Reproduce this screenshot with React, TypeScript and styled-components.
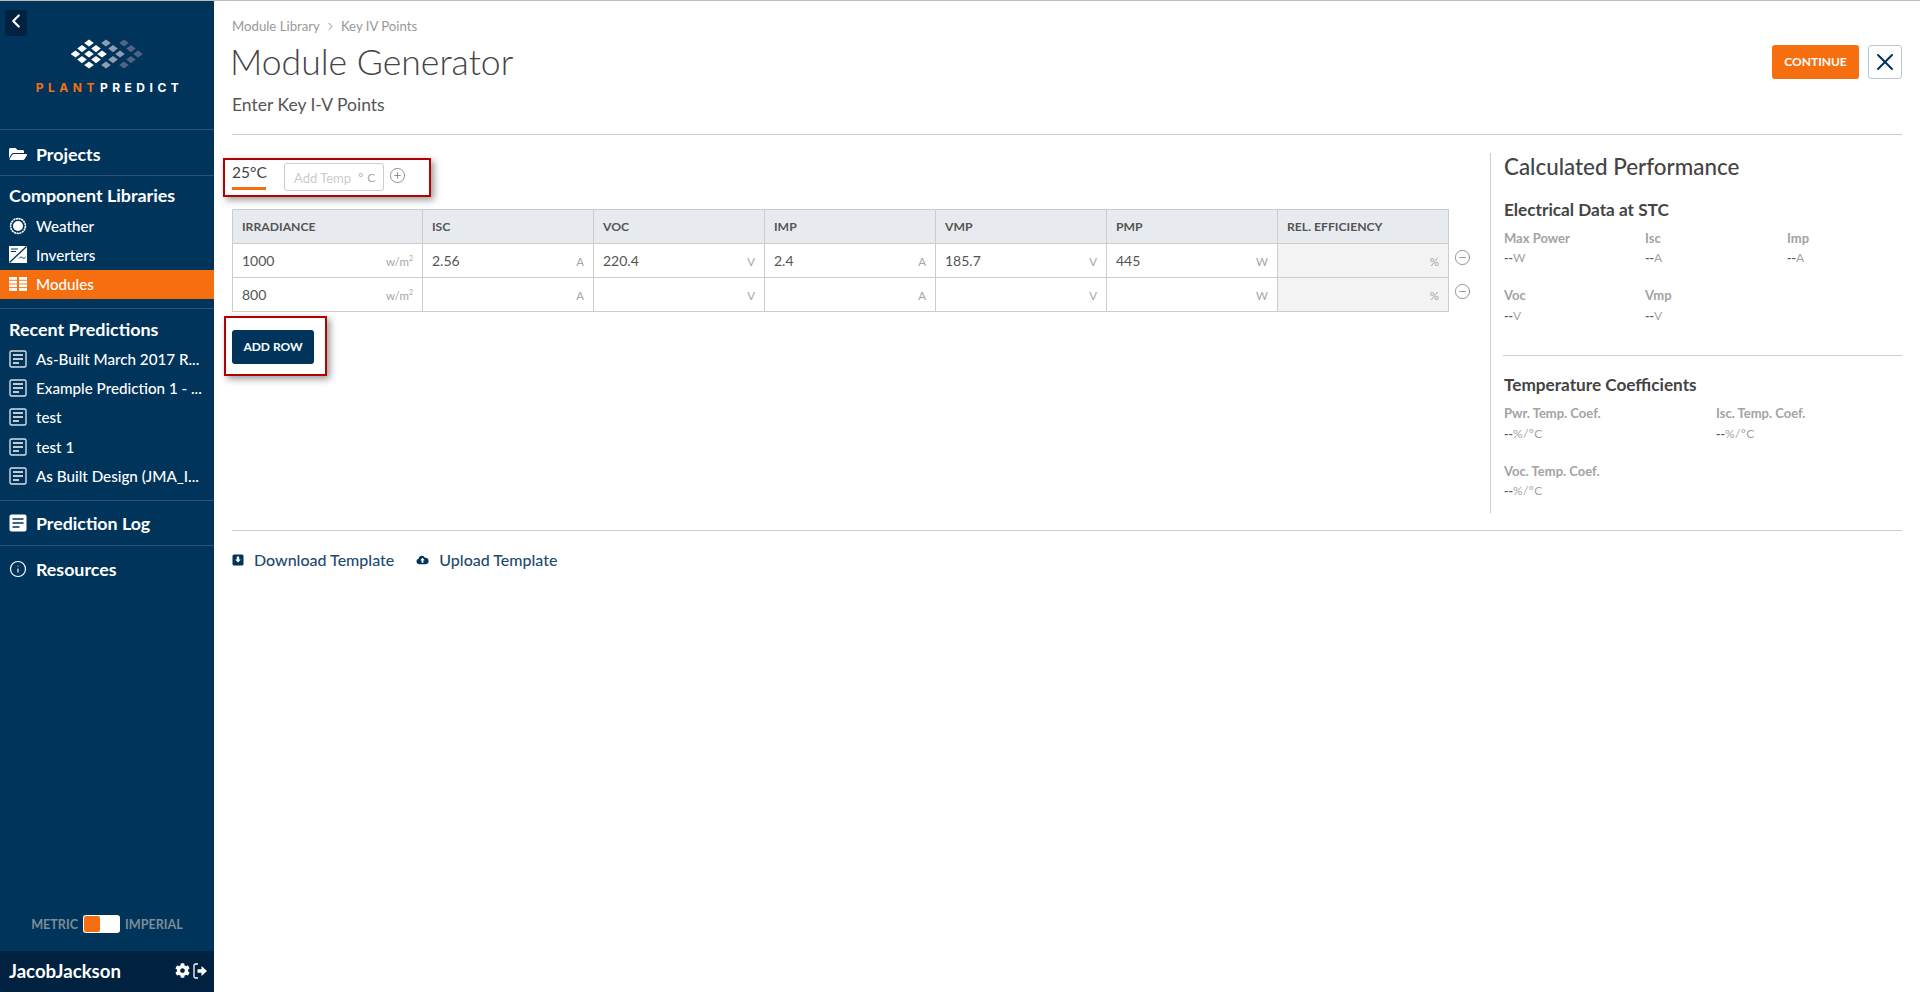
import React from "react";
import styled, { createGlobalStyle } from "styled-components";
import { ChevronLeft, ChevronRight, CircleMinus, CirclePlus, Info, X } from "lucide-react";
import { FaCog, FaFolderOpen } from "react-icons/fa";

const Global = createGlobalStyle`
  html, body { margin: 0; padding: 0; height: 100%; background: #fff; }
  body { font-family: "Lato", "Open Sans", sans-serif; color: #444; }
  #root { height: 992px; }
  * { box-sizing: border-box; }
`;

const NAVY = "#00345b";
const ORANGE = "#f56f10";

const Page = styled.div`
  display: flex;
  height: 992px;
  border-top: 1px solid #bdbdbd;
  overflow: hidden;
`;

const Sidebar = styled.aside`
  width: 214px;
  flex: none;
  background: ${NAVY};
  color: #fff;
  display: flex;
  flex-direction: column;
  position: relative;
`;

const BackButton = styled.button`
  position: absolute;
  left: 5px;
  top: 9px;
  width: 22px;
  height: 26px;
  border: 0;
  padding: 0 0 4px;
  border-radius: 3px;
  background: #00213f;
  color: #fff;
  display: flex;
  align-items: center;
  justify-content: center;
`;

const LogoArea = styled.div`
  height: 129px;
  padding-top: 37px;
  display: flex;
  flex-direction: column;
  align-items: center;
  border-bottom: 1px solid #2b5376;
`;

const LogoWord = styled.div`
  margin-top: 11px;
  margin-left: 5px;
  font-size: 12px;
  font-weight: 700;
  letter-spacing: 4.5px;
  line-height: 14px;
  white-space: nowrap;
  font-family: "Inter", sans-serif;
`;

const LogoOrange = styled.span`
  color: ${ORANGE};
  margin-right: 1px;
`;

const NavSection = styled.div<{ $h: number; $line?: boolean }>`
  height: ${(p) => p.$h}px;
  display: flex;
  flex-direction: column;
  border-bottom: ${(p) => (p.$line ? "1px solid #2b5376" : "0")};
`;

const TopLink = styled.div<{ $pad?: number }>`
  flex: 1;
  display: flex;
  align-items: center;
  gap: 9px;
  padding: ${(p) => p.$pad ?? 0}px 0 0 9px;
  font-size: 17.8px;
  font-weight: 700;
`;

const SectionTitle = styled.div<{ $top: number; $bottom: number }>`
  height: 29px;
  flex: none;
  margin: ${(p) => p.$top}px 0 ${(p) => p.$bottom}px;
  padding: 0 0 0 9px;
  display: flex;
  align-items: center;
  font-size: 17.9px;
  font-weight: 700;
  white-space: nowrap;
`;

const NavItem = styled.div<{ $active?: boolean }>`
  height: 29.3px;
  flex: none;
  display: flex;
  align-items: center;
  gap: 9px;
  padding-left: 9px;
  font-size: 15.2px;
  font-weight: 500;
  white-space: nowrap;
  background: ${(p) => (p.$active ? ORANGE : "transparent")};
`;

const IconSlot = styled.span`
  width: 18px;
  height: 18px;
  flex: none;
  display: flex;
  align-items: center;
  justify-content: center;
`;

const Spacer = styled.div`
  flex: 1;
`;

const UnitToggle = styled.div`
  height: 18px;
  margin-bottom: 18px;
  display: flex;
  align-items: center;
  justify-content: center;
  gap: 5px;
  font-size: 12.6px;
  font-weight: 700;
  color: #7f8b96;
`;

const ToggleTrack = styled.div`
  width: 37px;
  height: 18px;
  border-radius: 3px;
  background: #fff;
  padding: 1px;
`;

const ToggleKnob = styled.div`
  width: 16px;
  height: 16px;
  border-radius: 2px;
  background: ${ORANGE};
`;

const UserBar = styled.div`
  height: 41px;
  background: #00213f;
  display: flex;
  align-items: center;
  justify-content: space-between;
  padding: 0 7px 2px 9px;
  font-size: 18.6px;
  font-weight: 700;
`;

const UserIcons = styled.div`
  display: flex;
  align-items: center;
  gap: 3px;
`;

const Main = styled.main`
  flex: 1;
  min-width: 0;
  padding: 0 18px 0 18px;
  display: flex;
  flex-direction: column;
`;

const HeaderRow = styled.div`
  display: flex;
  justify-content: space-between;
  height: 134px;
  border-bottom: 1px solid #ccc;
`;

const HeaderText = styled.div`
  display: flex;
  flex-direction: column;
`;

const Breadcrumb = styled.div`
  margin-top: 18px;
  height: 14px;
  display: flex;
  align-items: center;
  gap: 4px;
  font-size: 13.2px;
  line-height: 14px;
  color: #999;
  svg {
    color: #777;
  }
`;

const Title = styled.h1`
  margin: 7px 0 0 -2px;
  font-size: 35.6px;
  line-height: 44px;
  font-weight: 300;
  color: #444;
`;

const Subtitle = styled.div`
  margin-top: 10px;
  font-size: 17.5px;
  line-height: 22px;
  color: #555;
`;

const HeaderActions = styled.div`
  margin-top: 44px;
  display: flex;
  gap: 9px;
  height: 34px;
`;

const ContinueButton = styled.button`
  width: 87px;
  height: 34px;
  padding: 0 0 2px;
  border: 0;
  border-radius: 3px;
  background: ${ORANGE};
  color: #fff;
  font: 700 12px "Lato", sans-serif;
`;

const CloseButton = styled.button`
  width: 34px;
  height: 34px;
  padding: 0;
  border: 1px solid #b9c7d6;
  border-radius: 3px;
  background: #fff;
  color: ${NAVY};
  display: flex;
  align-items: center;
  justify-content: center;
`;

const Body = styled.div`
  display: flex;
  height: 396px;
  border-bottom: 1px solid #ccc;
  padding-top: 18px;
`;

const LeftColumn = styled.div`
  width: 1258px;
  flex: none;
`;

const Highlight = styled.div`
  border: 2px solid #b30000;
  box-shadow: 3px 3px 7px rgba(0, 0, 0, 0.4);
  background: #fff;
`;

const TempBar = styled(Highlight)`
  width: 208px;
  height: 39px;
  margin: 5px 0 0 -9px;
  padding-left: 7px;
  display: flex;
  align-items: flex-start;
`;

const TempTab = styled.div`
  width: 34px;
  height: 30px;
  border-bottom: 3px solid ${ORANGE};
  font-size: 15.5px;
  line-height: 24px;
  color: #444;
  white-space: nowrap;
`;

const TempInput = styled.div`
  width: 100px;
  height: 28px;
  margin: 3px 0 0 18px;
  border: 1px solid #ccc;
  border-radius: 3px;
  padding: 1px 7px 0 9px;
  display: flex;
  align-items: center;
  justify-content: space-between;
  font-size: 13px;
  color: #ccc;
`;

const TempUnit = styled.span`
  color: #aaa;
  font-size: 12px;
  letter-spacing: 0.6px;
`;

const PlusButton = styled.span`
  margin: 7px 0 0 5px;
  color: #777;
  display: flex;
`;

const Grid = styled.div`
  margin-top: 13px;
`;

const GridRow = styled.div`
  display: flex;
  align-items: flex-start;
  height: 34px;
`;

const Cell = styled.div<{ $w: number; $kind?: "head" | "off" }>`
  width: ${(p) => p.$w}px;
  height: 35px;
  flex: none;
  margin-left: -1px;
  margin-top: -1px;
  border: 1px solid #ccc;
  padding: 0 9px 1px;
  display: flex;
  align-items: center;
  justify-content: space-between;
  background: ${(p) => (p.$kind === "head" ? "#e7ebef" : p.$kind === "off" ? "#f3f3f3" : "#fff")};
  font-size: ${(p) => (p.$kind === "head" ? 12.2 : 14)}px;
  font-weight: ${(p) => (p.$kind === "head" ? 700 : 400)};
  color: #555;
  &:first-child { margin-left: 0; }
`;

const CellUnit = styled.span`
  margin-left: auto;
  margin-top: 3px;
  font-size: 11.5px;
  color: #a5a5a5;
`;

const Sup = styled.sup`
  font-size: 7px;
  line-height: 0;
`;

const RemoveIcon = styled.span`
  margin: 5px 0 0 5px;
  color: #777;
  display: flex;
  height: 17px;
`;

const AddRowBox = styled(Highlight)`
  width: 103px;
  height: 60px;
  margin: 4px 0 0 -8px;
  padding: 12px 0 0 6px;
`;

const AddRowButton = styled.button`
  width: 82px;
  height: 34px;
  padding: 0 0 2px;
  border: 0;
  border-radius: 3px;
  background: ${NAVY};
  color: #fff;
  font: 700 12px "Lato", sans-serif;
`;

const Panel = styled.section`
  flex: 1;
  min-width: 0;
  height: 360px;
  border-left: 1px solid #ccc;
  padding-left: 13px;
`;

const PanelTitle = styled.h2`
  margin: 0;
  height: 28px;
  font-size: 22.4px;
  line-height: 28px;
  font-weight: 500;
  color: #444;
`;

const PanelSubhead = styled.h3`
  margin: 0;
  font-size: 17.2px;
  line-height: 22px;
  font-weight: 700;
  color: #444;
`;

const StcHead = styled(PanelSubhead)`
  margin-top: 17.5px;
`;

const Metrics = styled.div<{ $cols: string }>`
  margin-top: 9px;
  display: grid;
  grid-template-columns: ${(p) => p.$cols};
  row-gap: 21px;
`;

const Metric = styled.div`
  display: flex;
  flex-direction: column;
  gap: 4.5px;
`;

const MetricLabel = styled.div`
  font-size: 13px;
  line-height: 16px;
  font-weight: 700;
  color: #a3a3a3;
`;

const MetricValue = styled.div`
  font-size: 12px;
  line-height: 16px;
  letter-spacing: 0.4px;
  color: #a3a3a3;
  b {
    color: #555;
    font-weight: 700;
    letter-spacing: 0;
  }
`;

const PanelRule = styled.hr`
  margin: 31.5px 0 18px -1px;
  border: 0;
  border-top: 1px solid #ccc;
`;

const Links = styled.div`
  margin-top: 20px;
  display: flex;
  gap: 22px;
`;

const TemplateLink = styled.a`
  display: flex;
  align-items: center;
  gap: 10px;
  font-size: 16px;
  line-height: 18px;
  font-weight: 500;
  color: #1e4a6e;
`;

const LogoMark = () => {
  const d = (x: number, y: number, fill: string) => (
    <path key={`${x}-${y}`} d={`M${x} ${y - 3.6}L${x + 4.8} ${y}L${x} ${y + 3.6}L${x - 4.8} ${y}Z`} fill={fill} />
  );
  const white = [[18, 5], [11, 10.6], [25, 10.6], [4.5, 16], [18, 16], [31, 16], [11, 21.6], [25, 21.6], [18, 27]];
  const grey = [[35, 5], [42, 10.6], [49, 16], [42, 21.6], [35, 27]];
  const dark = [[53, 5], [60, 10.6], [67, 16], [60, 21.6], [53, 27]];
  return (
    <svg width="72" height="32" viewBox="0 0 72 32" aria-hidden>
      {white.map(([x, y]) => d(x, y, "#fff"))}
      {grey.map(([x, y]) => d(x, y, "#8f9db3"))}
      {dark.map(([x, y]) => d(x, y, "#4f6484"))}
    </svg>
  );
};

const WeatherIcon = () => (
  <svg width="18" height="18" viewBox="0 0 18 18" aria-hidden>
    <circle cx="9" cy="9" r="5" fill="#fff" />
    <circle cx="9" cy="9" r="7.4" fill="none" stroke="#fff" strokeWidth="1.6" strokeDasharray="2.2 0.5" />
  </svg>
);

const InverterIcon = () => (
  <svg width="18" height="17" viewBox="0 0 18 17" aria-hidden>
    <rect width="18" height="17" fill="#fff" />
    <path d="M0.5 16.5L17.5 0.5" stroke={NAVY} strokeWidth="1.3" />
    <path d="M2 3h7M2 5.5h5" stroke={NAVY} strokeWidth="1" />
    <path d="M10 12.5c1.5-2 2.5-1.5 3.5-.8s2 .8 3-.5" stroke={NAVY} strokeWidth="1" fill="none" />
  </svg>
);

const ModulesIcon = () => (
  <svg width="18" height="14" viewBox="0 0 18 14" aria-hidden fill="#fff">
    {[0, 3.7, 7.4, 11.1].map((y) => (
      <React.Fragment key={y}>
        <rect x="0" y={y} width="8" height="2.8" />
        <rect x="10" y={y} width="8" height="2.8" />
      </React.Fragment>
    ))}
  </svg>
);

const DocIcon = () => (
  <svg width="18" height="18" viewBox="0 0 18 18" aria-hidden fill="none" stroke="#fff">
    <rect x="1" y="1" width="16" height="16" rx="1.5" strokeWidth="1.4" stroke="#d5dee6" />
    <path d="M4 5h10M4 9h10M4 13h6" strokeWidth="1.6" />
  </svg>
);

const LogIcon = () => (
  <svg width="18" height="18" viewBox="0 0 18 18" aria-hidden>
    <rect x="0.5" y="0.5" width="17" height="17" rx="2" fill="#fff" />
    <path d="M3.5 5h11M3.5 9h11M3.5 13h7" stroke={NAVY} strokeWidth="1.7" />
  </svg>
);

const SignOutIcon = () => (
  <svg width="14" height="16" viewBox="0 0 14 16" aria-hidden fill="none">
    <path d="M5 1H2.5A1.5 1.5 0 0 0 1 2.5v11A1.5 1.5 0 0 0 2.5 15H5" stroke="#fff" strokeWidth="1.3" />
    <path d="M4.5 6.2H8.5V3L14 8L8.5 13V9.8H4.5Z" fill="#fff" />
  </svg>
);

const DownloadIcon = () => (
  <svg width="12" height="12" viewBox="0 0 12 12" aria-hidden>
    <rect width="11" height="11" x="0.5" y="0.5" rx="1.5" fill={NAVY} />
    <path d="M4.8 2.5h2.4v3h1.6L6 8.6 3.2 5.5h1.6z" fill="#fff" />
  </svg>
);

const UploadIcon = () => (
  <svg width="13" height="12" viewBox="0 0 14 12" aria-hidden>
    <path d="M3.4 10.5A3 3 0 0 1 2.7 4.6 3.6 3.6 0 0 1 9.6 3.7 3.4 3.4 0 0 1 10.6 10.5Z" fill={NAVY} />
    <path d="M7 3.6L9.4 6.4H8V9H6V6.4H4.6Z" fill="#fff" />
  </svg>
);

const COLS = [
  { name: "IRRADIANCE", w: 191, unit: <>w/m<Sup>2</Sup></> },
  { name: "ISC", w: 172, unit: "A" },
  { name: "VOC", w: 172, unit: "V" },
  { name: "IMP", w: 172, unit: "A" },
  { name: "VMP", w: 172, unit: "V" },
  { name: "PMP", w: 172, unit: "W" },
  { name: "REL. EFFICIENCY", w: 172, unit: "%" },
];

const ROWS = [
  ["1000", "2.56", "220.4", "2.4", "185.7", "445", ""],
  ["800", "", "", "", "", "", ""],
];

const RECENT = ["As-Built March 2017 R...", "Example Prediction 1 - ...", "test", "test 1", "As Built Design (JMA_I..."];

const STC = [
  ["Max Power", "W"],
  ["Isc", "A"],
  ["Imp", "A"],
  ["Voc", "V"],
  ["Vmp", "V"],
];

const COEF = ["Pwr. Temp. Coef.", "Isc. Temp. Coef.", "Voc. Temp. Coef."];

export default function App() {
  return (
    <>
      <Global />
      <Page>
        <Sidebar>
          <BackButton aria-label="Collapse"><ChevronLeft size={22} strokeWidth={2.4} /></BackButton>
          <LogoArea>
            <LogoMark />
            <LogoWord><LogoOrange>PLANT</LogoOrange>PREDICT</LogoWord>
          </LogoArea>
          <NavSection $h={46} $line>
            <TopLink $pad={2}><IconSlot><FaFolderOpen size={18} /></IconSlot>Projects</TopLink>
          </NavSection>
          <NavSection $h={133} $line>
            <SectionTitle $top={4} $bottom={2}>Component Libraries</SectionTitle>
            <NavItem><IconSlot><WeatherIcon /></IconSlot>Weather</NavItem>
            <NavItem><IconSlot><InverterIcon /></IconSlot>Inverters</NavItem>
            <NavItem $active><IconSlot><ModulesIcon /></IconSlot>Modules</NavItem>
          </NavSection>
          <NavSection $h={192} $line>
            <SectionTitle $top={5} $bottom={1}>Recent Predictions</SectionTitle>
            {RECENT.map((r) => (
              <NavItem key={r}><IconSlot><DocIcon /></IconSlot>{r}</NavItem>
            ))}
          </NavSection>
          <NavSection $h={45} $line>
            <TopLink><IconSlot><LogIcon /></IconSlot>Prediction Log</TopLink>
          </NavSection>
          <NavSection $h={46}>
            <TopLink><IconSlot><Info size={18} strokeWidth={1.6} /></IconSlot>Resources</TopLink>
          </NavSection>
          <Spacer />
          <UnitToggle>METRIC<ToggleTrack><ToggleKnob /></ToggleTrack>IMPERIAL</UnitToggle>
          <UserBar>
            JacobJackson
            <UserIcons><FaCog size={15} /><SignOutIcon /></UserIcons>
          </UserBar>
        </Sidebar>
        <Main>
          <HeaderRow>
            <HeaderText>
              <Breadcrumb>Module Library<ChevronRight size={13} strokeWidth={1.5} />Key IV Points</Breadcrumb>
              <Title>Module Generator</Title>
              <Subtitle>Enter Key I-V Points</Subtitle>
            </HeaderText>
            <HeaderActions>
              <ContinueButton>CONTINUE</ContinueButton>
              <CloseButton aria-label="Close"><X size={28} strokeWidth={1.7} /></CloseButton>
            </HeaderActions>
          </HeaderRow>
          <Body>
            <LeftColumn>
              <TempBar>
                <TempTab>25°C</TempTab>
                <TempInput>Add Temp<TempUnit>° C</TempUnit></TempInput>
                <PlusButton><CirclePlus size={17} strokeWidth={1.1} /></PlusButton>
              </TempBar>
              <Grid>
                <GridRow>
                  {COLS.map((c) => <Cell key={c.name} $w={c.w} $kind="head">{c.name}</Cell>)}
                </GridRow>
                {ROWS.map((row) => (
                  <GridRow key={row[0]}>
                    {row.map((v, i) => (
                      <Cell key={COLS[i].name} $w={COLS[i].w} $kind={i === 6 ? "off" : undefined}>
                        {v}<CellUnit>{COLS[i].unit}</CellUnit>
                      </Cell>
                    ))}
                    <RemoveIcon><CircleMinus size={17} strokeWidth={1.1} /></RemoveIcon>
                  </GridRow>
                ))}
              </Grid>
              <AddRowBox><AddRowButton>ADD ROW</AddRowButton></AddRowBox>
            </LeftColumn>
            <Panel>
              <PanelTitle>Calculated Performance</PanelTitle>
              <StcHead>Electrical Data at STC</StcHead>
              <Metrics $cols="141px 142px 1fr">
                {STC.map(([l, u]) => (
                  <Metric key={l}>
                    <MetricLabel>{l}</MetricLabel>
                    <MetricValue><b>--</b>{u}</MetricValue>
                  </Metric>
                ))}
              </Metrics>
              <PanelRule />
              <PanelSubhead>Temperature Coefficients</PanelSubhead>
              <Metrics $cols="212px 1fr">
                {COEF.map((l) => (
                  <Metric key={l}>
                    <MetricLabel>{l}</MetricLabel>
                    <MetricValue><b>--</b>%/°C</MetricValue>
                  </Metric>
                ))}
              </Metrics>
            </Panel>
          </Body>
          <Links>
            <TemplateLink><DownloadIcon />Download Template</TemplateLink>
            <TemplateLink><UploadIcon />Upload Template</TemplateLink>
          </Links>
        </Main>
      </Page>
    </>
  );
}
